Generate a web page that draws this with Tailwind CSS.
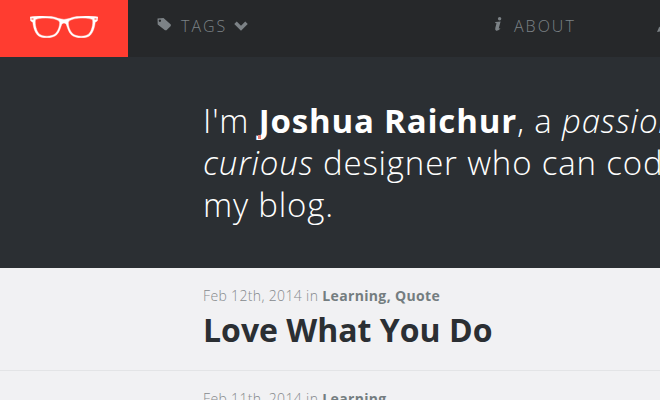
<!DOCTYPE html>
<html lang="en">
<head>
  <meta charset="UTF-8" />
  <meta name="viewport" content="width=device-width, initial-scale=1.0" />
  <title>Joshua Raichur</title>
  <script src="https://cdn.jsdelivr.net/npm/@tailwindcss/browser@4"></script>
</head>
<body class="min-h-screen overflow-x-hidden bg-[#f1f1f3] font-['Open_Sans',sans-serif] text-[#2b2f33]">

  <header class="flex h-[57px] overflow-hidden bg-[#26282a] text-[#7c8286]">
    <a href="#" aria-label="Home" class="flex w-32 shrink-0 justify-center bg-[#ff3c30] pt-4">
      <svg class="h-[22px] w-[68px]" viewBox="0 0 68 22" fill="none" stroke="#fff" stroke-linejoin="round">
        <path fill="#fff" fill-rule="evenodd" stroke="#fff" stroke-width=".4" d="M0 1C8-.4 22-.6 28 2.300Q34 4.600 40 2.300C46-.6 60-.4 68 1L67.300 5L65.200 6.200C64.500 13 62.500 17 60 19.500C56 23 45 22.600 41 18.500C38.500 16 37.300 11 36.300 8.500Q35.500 7 34 7Q32.500 7 31.700 8.500C30.700 11 29.500 16 27 18.500C23 22.600 12 23 8 19.500C5.500 17 3.500 13 2.800 6.200L.7 5ZM5.500 3.600C4.500 8 6.500 15.500 9.500 18.200C13 21 22 20.800 25.500 17.500C28.500 14.500 30 9 29.600 6.200C28.500 2 12 .8 5.500 3.600ZM62.500 3.600C56 .8 39.500 2 38.400 6.200C38 9 39.500 14.500 42.500 17.500C46 20.800 55 21 58.500 18.200C61.500 15.500 63.500 8 62.500 3.600Z"/>
        <path stroke="#ff3c30" d="M1.500 3h2M64.500 3h2"/>
      </svg>
    </a>
    <nav class="flex-1 pt-[15px] pl-[29px] text-base leading-[22px] font-light tracking-[2px]">
      <ul class="flex">
        <li class="w-[337px] shrink-0">
          <button type="button" class="flex items-center tracking-[2px]">
            <svg class="mr-[10px] mb-1 size-[14px]" viewBox="0 0 14 14" fill="currentColor">
              <path fill-rule="evenodd" d="M.5 1.500L6.500 1L13.800 7.500V9L9.500 13.200H8L.7 7.500ZM2.900 2.500a1.200 1.200 0 1 0 .01 0Z"/>
            </svg>
            TAGS
            <svg class="ml-[7px] h-[10px] w-[14px]" viewBox="0 0 14 10" fill="none" stroke="currentColor" stroke-width="3.500">
              <path d="M1.500 1.700L7 7.200L12.500 1.700"/>
            </svg>
          </button>
        </li>
        <li class="w-[163px] shrink-0">
          <a href="#" class="flex items-center">
            <svg class="mr-3 mb-1 h-[14px] w-2" viewBox="0 0 8 14" fill="currentColor">
              <circle cx="5.600" cy="1.800" r="1.700"/>
              <path d="M1.500 5L6.600 4.500L4.800 11.200Q4.600 12 6.300 11L6 12Q4 14 2.200 13.700Q.8 13 1.300 11L2.500 6.300L1 6Z"/>
            </svg>
            ABOUT
          </a>
        </li>
        <li class="shrink-0">
          <a href="#" aria-label="Write" class="flex h-[22px] items-center">
            <svg class="size-[14px]" viewBox="0 0 14 14" fill="currentColor">
              <path d="M0 13L2 8.500L9.500 1L13 4.500L5.500 12Z"/>
            </svg>
          </a>
        </li>
      </ul>
    </nav>
  </header>

  <section class="overflow-hidden bg-[#2b2f33] pt-[43px] pb-[42px] pl-[203px]">
    <h1 class="w-[640px] text-[33px] leading-[42px] font-light tracking-wide text-white">
      I'm <strong class="relative font-bold">Joshua Raichur<span class="absolute bottom-1 -left-px h-1 w-[3px] bg-[#e88078]"></span></strong>, a <em>passionate</em> and<br />
      <em>curious</em> designer who can code. This is<br />
      my blog.
    </h1>
  </section>

  <main>
    <article class="border-b border-[#e3e4e6] pt-[18px] pb-[17px] pl-[203px]">
      <p class="text-sm leading-5 font-light tracking-wide text-[#85898c]">Feb 12th, 2014 in <a href="#" class="font-bold text-[#747d80]">Learning, Quote</a></p>
      <h2 class="pt-px text-[32px] leading-[46px] font-bold"><a href="#">Love What You Do</a></h2>
    </article>
    <article class="pt-[18px] pl-[203px]">
      <p class="text-sm leading-5 font-light tracking-wide text-[#85898c]">Feb 11th, 2014 in <a href="#" class="font-bold text-[#747d80]">Learning</a></p>
    </article>
  </main>

</body>
</html>
